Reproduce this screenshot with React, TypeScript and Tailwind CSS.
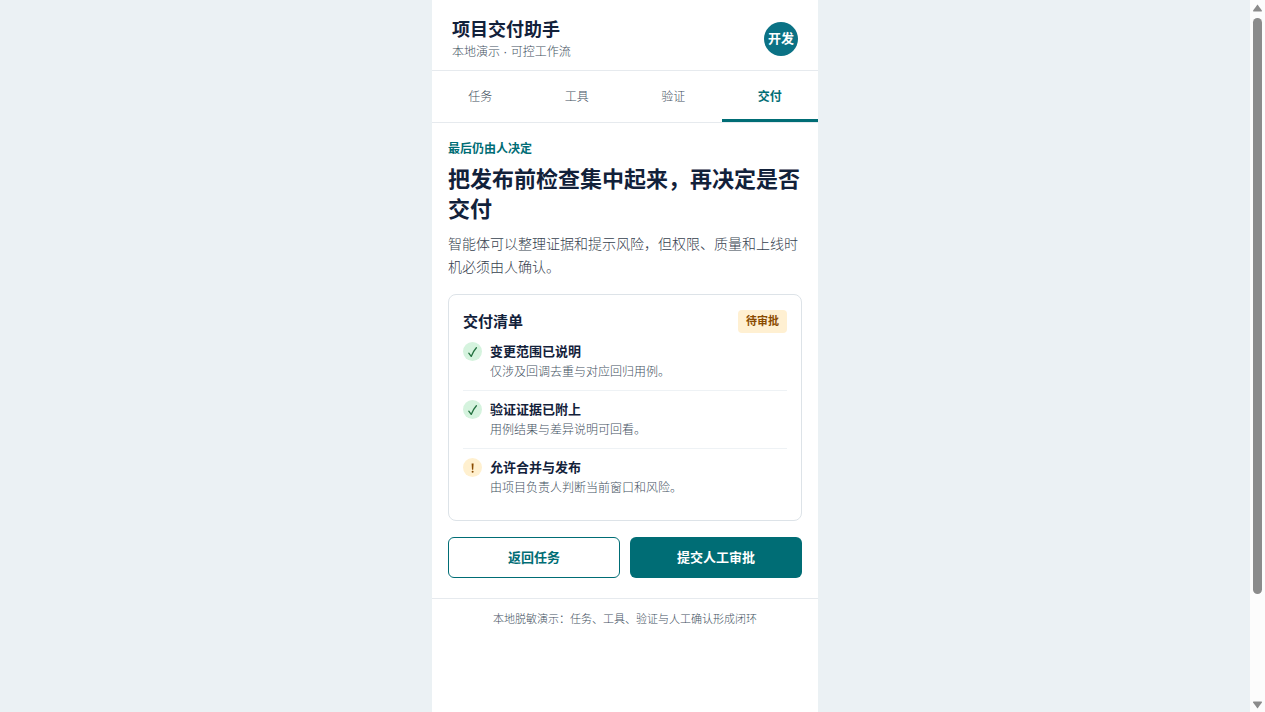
import React from 'react';

type CheckState = 'done' | 'pending';

interface ChecklistItem {
  id: number;
  title: string;
  detail: string;
  state: CheckState;
}

const tabs = ['任务', '工具', '验证', '交付'];

const checklist: ChecklistItem[] = [
  { id: 1, title: '变更范围已说明', detail: '仅涉及回调去重与对应回归用例。', state: 'done' },
  { id: 2, title: '验证证据已附上', detail: '用例结果与差异说明可回看。', state: 'done' },
  { id: 3, title: '允许合并与发布', detail: '由项目负责人判断当前窗口和风险。', state: 'pending' }
];

const StateIcon: React.FC<{ state: CheckState }> = ({ state }) => (
  <span
    className={`flex size-[19px] shrink-0 items-center justify-center rounded-full ${
      state === 'done' ? 'bg-[#d5f3de] text-[#23703f]' : 'bg-[#fff0cf] text-[#8a4b00]'
    }`}
  >
    {state === 'done' ? (
      <svg viewBox="0 0 12 12" className="size-3" fill="none" stroke="currentColor">
        <path d="M1.8 7.2 4.2 10.4Q6 5.6 9.4 1.8" strokeWidth="1.3" strokeLinecap="round" strokeLinejoin="round" />
      </svg>
    ) : (
      <svg viewBox="0 0 12 12" className="size-3" fill="currentColor">
        <path d="M4.6 1.6h2L6.2 7.8H5z" />
        <circle cx="5.6" cy="9.8" r="1" />
      </svg>
    )}
  </span>
);

const ScrollRail: React.FC = () => (
  <div className="sticky top-0 flex h-screen w-[15px] shrink-0 flex-col items-center bg-[#fcfcfc]" aria-hidden="true">
    <svg viewBox="0 0 15 18" className="h-[18px] w-[15px]" fill="#8b8b8b">
      <path d="M7.5 4.5 11.9 10.6Q12.3 11.6 11.3 11.6H3.7Q2.7 11.6 3.1 10.6z" />
    </svg>
    <div className="w-full flex-1">
      <div className="mx-auto h-[85%] w-[9px] rounded-full bg-[#8b8b8b]" />
    </div>
    <svg viewBox="0 0 15 16" className="h-4 w-[15px]" fill="#8b8b8b">
      <path d="M7.5 12.5 11.9 6.4Q12.3 5.4 11.3 5.4H3.7Q2.7 5.4 3.1 6.4z" />
    </svg>
  </div>
);

const App: React.FC = () => {
  const [activeTab, setActiveTab] = React.useState('交付');

  return (
    <div className="flex min-h-screen bg-[#ebf1f4] font-['Liberation_Sans','Noto_Sans_CJK_SC',sans-serif] text-[#12213a]">
      <div className="flex min-w-0 flex-1 justify-center">
        <div className="w-full max-w-[386px] bg-white">
          {/* Header */}
          <header className="flex items-center justify-between border-b border-[#e6eaee] px-5 pt-[17px] pb-[9px]">
            <div>
              <h1 className="text-lg leading-[26px] font-bold">项目交付助手</h1>
              <p className="text-xs leading-[18px] font-light text-[#435161]">本地演示 · 可控工作流</p>
            </div>
            <span className="flex size-[34px] items-center justify-center rounded-full bg-[#0b7285] text-[13px] font-bold text-white">
              开发
            </span>
          </header>

          {/* Tabs */}
          <nav className="grid grid-cols-4 border-b border-[#e6eaee]">
            {tabs.map(tab => (
              <button
                key={tab}
                onClick={() => setActiveTab(tab)}
                className={`h-[51px] border-b-3 pt-1 text-xs ${
                  activeTab === tab
                    ? 'border-[#006d75] font-bold text-[#006d75]'
                    : 'border-transparent font-light text-[#435161]'
                }`}
              >
                {tab}
              </button>
            ))}
          </nav>

          <main className="px-4 pt-[17px] pb-5">
            <p className="text-xs leading-[18px] font-bold text-[#006d75]">最后仍由人决定</p>
            <h2 className="mt-[7px] text-[22px] leading-[30px] font-bold">
              把发布前检查集中起来，再决定是否交付
            </h2>
            <p className="mt-2 text-sm leading-[23px] font-light text-[#36414e]">
              智能体可以整理证据和提示风险，但权限、质量和上线时机必须由人确认。
            </p>

            {/* Checklist card */}
            <section className="mt-[15px] rounded-lg border border-[#dde3e8] px-[14px] pt-[15px] pb-[14px]">
              <div className="flex items-center justify-between">
                <h3 className="text-[15px] leading-[23px] font-bold">交付清单</h3>
                <span className="rounded bg-[#fff0d2] px-[8px] text-[11px] leading-[23px] font-bold text-[#8a4b00]">
                  待审批
                </span>
              </div>
              <ul>
                {checklist.map(item => (
                  <li
                    key={item.id}
                    className="flex gap-2 border-b border-[#eef2f5] pt-[9px] pb-2 last:border-b-0"
                  >
                    <StateIcon state={item.state} />
                    <div>
                      <p className="text-[13px] leading-5 font-bold">{item.title}</p>
                      <p className="text-xs leading-5 font-light text-[#435161]">{item.detail}</p>
                    </div>
                  </li>
                ))}
              </ul>
            </section>

            {/* Actions */}
            <div className="mt-4 grid grid-cols-2 gap-[10px]">
              <button className="h-[41px] rounded-md border border-[#006d75] bg-white pt-px text-[13px] font-bold text-[#006d75]">
                返回任务
              </button>
              <button className="h-[41px] rounded-md bg-[#006d75] pt-px text-[13px] font-bold text-white">
                提交人工审批
              </button>
            </div>
          </main>

          <footer className="border-t border-[#e6eaee] py-3 text-center text-[11px] leading-[17px] font-light text-[#435161]">
            本地脱敏演示：任务、工具、验证与人工确认形成闭环
          </footer>
        </div>
      </div>
      <ScrollRail />
    </div>
  );
};

export default App;
